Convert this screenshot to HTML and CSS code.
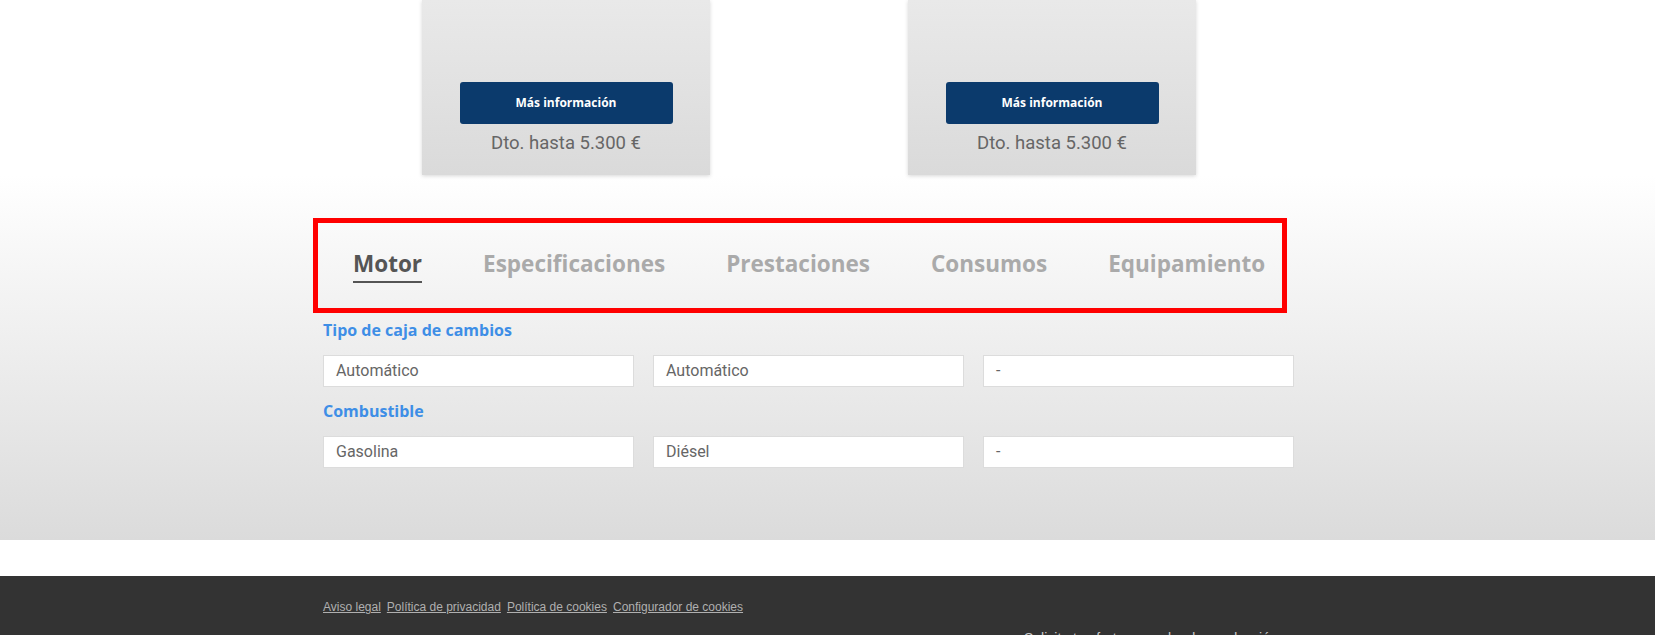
FILE: index.html
```html
<!DOCTYPE html>
<html lang="es">
<head>
<meta charset="utf-8">
<title>Comparador de versiones</title>
<link rel="stylesheet" href="styles.css">
</head>
<body>
<div class="top">
  <div class="container cards">
    <div class="card">
      <a class="btn" href="#">Más información</a>
      <p class="price">Dto. hasta 5.300 €</p>
    </div>
    <div class="card">
      <a class="btn" href="#">Más información</a>
      <p class="price">Dto. hasta 5.300 €</p>
    </div>
  </div>
</div>
<section class="specs">
  <div class="container">
    <nav class="tabs">
      <span class="tab active">Motor</span>
      <span class="tab">Especificaciones</span>
      <span class="tab">Prestaciones</span>
      <span class="tab">Consumos</span>
      <span class="tab">Equipamiento</span>
    </nav>
    <div class="group first">
      <h3 class="group-title">Tipo de caja de cambios</h3>
      <div class="row">
        <div class="cell">Automático</div>
        <div class="cell">Automático</div>
        <div class="cell">-</div>
      </div>
    </div>
    <div class="group">
      <h3 class="group-title">Combustible</h3>
      <div class="row">
        <div class="cell">Gasolina</div>
        <div class="cell">Diésel</div>
        <div class="cell">-</div>
      </div>
    </div>
  </div>
</section>
<div class="spacer"></div>
<footer class="footer">
  <div class="container">
    <div class="links">
      <a href="#">Aviso legal</a>
      <a href="#">Política de privacidad</a>
      <a href="#">Política de cookies</a>
      <a href="#">Configurador de cookies</a>
    </div>
    <p class="footer-note">Solicita tu oferta o prueba de conducción</p>
  </div>
</footer>
</body>
</html>
```
FILE: styles.css
```css
html, body {
  margin: 0;
  padding: 0;
  background: #fff;
  font-family: "Open Sans", sans-serif;
}

.container {
  width: 1009px;
  margin: 0 auto;
}

.top {
  height: 175px;
  position: relative;
  z-index: 1;
}

.cards {
  display: flex;
  gap: 198px;
  padding-left: 99px;
  box-sizing: border-box;
}

.card {
  width: 288px;
  height: 175px;
  box-sizing: border-box;
  background: linear-gradient(#e9e9e9, #dadada);
  box-shadow: 0 1px 4px rgba(0, 0, 0, 0.16);
  display: flex;
  flex-direction: column;
  align-items: center;
  justify-content: flex-end;
  padding-bottom: 21px;
}

.btn {
  display: block;
  width: 213px;
  height: 42px;
  background: #0b3a6c;
  border-radius: 3px;
  color: #fff;
  text-decoration: none;
  text-align: center;
  font: 700 12px/42px "Open Sans", sans-serif;
}

.price {
  margin: 9px 0 0;
  font: 400 18.5px/21px Roboto, sans-serif;
  color: #666;
}

.specs {
  height: 365px;
  box-sizing: border-box;
  padding-top: 43px;
  background: linear-gradient(#fff, #dbdbdb);
}

.tabs {
  margin-left: -10px;
  width: 974px;
  box-sizing: border-box;
  border: 5px solid #ff0000;
  padding: 27px 0 25px 35px;
  display: flex;
  gap: 61px;
  align-items: flex-start;
}

.tab {
  font: 700 22.5px/28px "Open Sans", sans-serif;
  color: #aaa;
  padding-bottom: 3px;
  border-bottom: 2px solid transparent;
}

.tab.active {
  color: #555;
  border-bottom-color: #555;
}

.group {
  margin-top: 14px;
}

.group.first {
  margin-top: 7px;
}

.group-title {
  margin: 0 0 15px;
  font: 700 16px/20px "Open Sans", sans-serif;
  color: #3e8ee6;
}

.row {
  display: grid;
  grid-template-columns: 311px 311px 311px;
  gap: 19px;
}

.cell {
  height: 32px;
  box-sizing: border-box;
  border: 1px solid #dcdcdc;
  background: #fff;
  padding-left: 12px;
  font: 400 16px/30px Roboto, sans-serif;
  color: #666;
}

.spacer {
  height: 36px;
}

.footer {
  background: #333;
  height: 59px;
  overflow: hidden;
}

.links {
  padding-top: 24px;
  display: flex;
  gap: 6px;
}

.links a {
  color: #b0b0b0;
  font: 400 12px/14px "Liberation Sans", Arial, sans-serif;
  text-decoration: underline;
}

.footer-note {
  margin: 16px 0 0 701px;
  font: 400 14px/16px "Liberation Sans", Arial, sans-serif;
  color: #ccc;
}
```
